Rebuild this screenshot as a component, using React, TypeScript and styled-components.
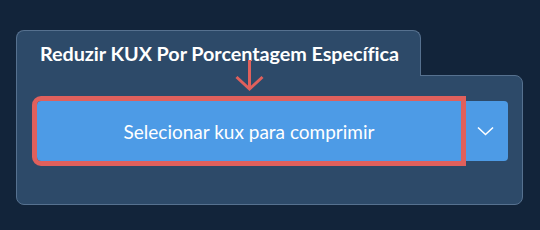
import React from "react";
import styled, { createGlobalStyle } from "styled-components";

const colors = {
  page: "#12243a",
  panel: "#2d4a69",
  border: "#56718f",
  blue: "#4d9be6",
  red: "#e0605c",
  white: "#ffffff",
};

const GlobalStyle = createGlobalStyle`
  html, body {
    margin: 0;
    padding: 0;
    background: ${colors.page};
    font-family: Lato, "Open Sans", sans-serif;
  }
`;

const Page = styled.div`
  width: 540px;
  height: 230px;
  padding: 30px 17px 0 16px;
  box-sizing: border-box;
`;

const Card = styled.div`
  position: relative;
  display: flex;
  flex-direction: column;
  align-items: flex-start;
`;

const Tab = styled.div`
  position: relative;
  z-index: 1;
  width: 405px;
  height: 46px;
  box-sizing: border-box;
  margin-bottom: -1px;
  padding: 0 0 1px 23px;
  display: flex;
  align-items: center;
  background: ${colors.panel};
  border: 1px solid ${colors.border};
  border-bottom: none;
  border-radius: 8px 8px 0 0;
  color: ${colors.white};
  font-weight: 700;
  font-size: 19.8px;
  letter-spacing: -0.05px;
  white-space: nowrap;
`;

const Body = styled.div`
  align-self: stretch;
  box-sizing: border-box;
  height: 130px;
  padding: 25px 14px 0 20px;
  background: ${colors.panel};
  border: 1px solid ${colors.border};
  border-radius: 0 8px 8px 8px;
`;

const SplitButton = styled.div`
  display: flex;
  height: 60px;
`;

const MainButton = styled.button<{ highlighted?: boolean }>`
  flex: 1;
  border: none;
  background: ${colors.blue};
  color: ${colors.white};
  font-family: Lato, "Open Sans", sans-serif;
  font-size: 19px;
  border-radius: 4px 0 0 4px;
  outline: ${({ highlighted }) =>
    highlighted ? `5px solid ${colors.red}` : "none"};
  position: relative;
  z-index: 1;
  cursor: pointer;
`;

const ToggleButton = styled.button`
  width: 47px;
  border: none;
  background: ${colors.blue};
  border-radius: 0 4px 4px 0;
  display: flex;
  align-items: center;
  justify-content: center;
  padding: 0 0 0 1px;
  cursor: pointer;
`;

const Pointer = styled.svg`
  position: absolute;
  left: 219px;
  top: 30px;
  z-index: 2;
`;

export default function App() {
  return (
    <>
      <GlobalStyle />
      <Page>
        <Card>
          <Tab>Reduzir KUX Por Porcentagem Específica</Tab>
          <Body>
            <SplitButton>
              <MainButton highlighted>Selecionar kux para comprimir</MainButton>
              <ToggleButton aria-label="Mais opções">
                <svg width="17" height="10" viewBox="0 0 17 10">
                  <polyline
                    points="1,1.5 8.5,8.5 16,1.5"
                    fill="none"
                    stroke={colors.white}
                    strokeWidth="1.6"
                  />
                </svg>
              </ToggleButton>
            </SplitButton>
          </Body>
          <Pointer width="29" height="32" viewBox="0 0 29 32">
            <line x1="14.5" y1="0" x2="14.5" y2="29" stroke={colors.red} strokeWidth="3" />
            <polyline
              points="1.5,17 14.5,29 27.5,17"
              fill="none"
              stroke={colors.red}
              strokeWidth="3"
            />
          </Pointer>
        </Card>
      </Page>
    </>
  );
}
